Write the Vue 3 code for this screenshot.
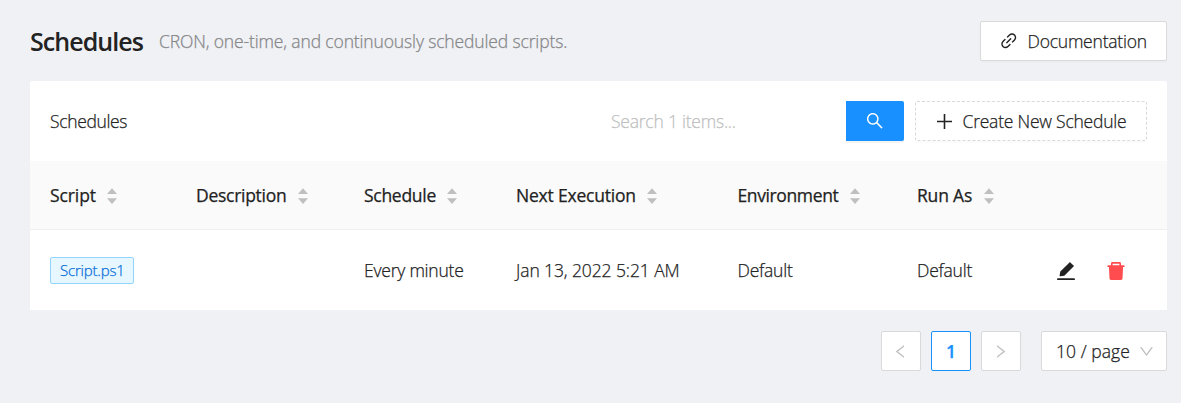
<script setup>
const columns = [
  { title: 'Script', fit: 'fit-a' },
  { title: 'Description', fit: 'fit-c' },
  { title: 'Schedule', fit: 'fit-c' },
  { title: 'Next Execution', fit: 'fit-b' },
  { title: 'Environment', fit: 'fit-d' },
  { title: 'Run As', fit: 'fit-b' },
]
</script>

<template>
  <main class="page">
    <header class="page-header">
      <h1>Schedules</h1>
      <p class="subtitle">CRON, one-time, and continuously scheduled scripts.</p>
      <button class="btn docs">
        <svg class="icon" viewBox="64 64 896 896"><path d="M574 665.4a8.03 8.03 0 00-11.3 0L446.5 781.6c-53.8 53.8-144.6 59.5-204 0-59.5-59.5-53.8-150.2 0-204l116.2-116.2c3.1-3.1 3.1-8.2 0-11.3l-39.8-39.8a8.03 8.03 0 00-11.3 0L191.4 526.5c-84.6 84.6-84.6 221.5 0 306s221.5 84.6 306 0l116.2-116.2c3.1-3.1 3.1-8.2 0-11.3L574 665.4zm258.6-474c-84.6-84.6-221.5-84.6-306 0L410.3 307.6a8.03 8.03 0 000 11.3l39.7 39.7c3.1 3.1 8.2 3.1 11.3 0l116.2-116.2c53.8-53.8 144.6-59.5 204 0 59.5 59.5 53.8 150.2 0 204L665.3 562.6a8.03 8.03 0 000 11.3l39.8 39.8c3.1 3.1 8.2 3.1 11.3 0l116.2-116.2c84.5-84.6 84.5-221.5 0-306.1zM610.1 372.3a8.03 8.03 0 00-11.3 0L372.3 598.7a8.03 8.03 0 000 11.3l39.6 39.6c3.1 3.1 8.2 3.1 11.3 0l226.4-226.4c3.1-3.1 3.1-8.2 0-11.3l-39.5-39.6z" /></svg>
        <span>Documentation</span>
      </button>
    </header>

    <section class="card">
      <div class="toolbar">
        <span class="card-title">Schedules</span>
        <div class="search">
          <input type="text" placeholder="Search 1 items..." />
          <button class="search-btn" aria-label="Search">
            <svg viewBox="64 64 896 896"><path d="M909.6 854.5L649.9 594.8C690.2 542.7 712 479 712 412c0-80.2-31.3-155.4-87.9-212.1-56.6-56.7-132-87.9-212.1-87.9s-155.5 31.3-212.1 87.9C143.2 256.5 112 331.8 112 412c0 80.1 31.3 155.5 87.9 212.1C256.5 680.8 331.8 712 412 712c67 0 130.6-21.8 182.7-62l259.7 259.6a8.2 8.2 0 0011.6 0l43.6-43.5a8.2 8.2 0 000-11.6zM570.4 570.4C528 612.7 471.8 636 412 636s-116-23.3-158.4-65.6C211.3 528 188 471.8 188 412s23.3-116.1 65.6-158.4C296 211.3 352.2 188 412 188s116.1 23.2 158.4 65.6S636 352.2 636 412s-23.3 116.1-65.6 158.4z" /></svg>
          </button>
        </div>
        <button class="btn create">
          <svg class="icon plus" viewBox="0 0 15 15"><path d="M6.7 0h1.6v6.7H15v1.6H8.3V15H6.7V8.3H0V6.7h6.7z" /></svg>
          <span>Create New Schedule</span>
        </button>
      </div>

      <div class="row head">
        <div v-for="c in columns" :key="c.title" class="cell">
          <span :class="c.fit">{{ c.title }}</span>
          <svg class="sorter" viewBox="0 0 10 16"><path d="M5 .2 10 6H0zM5 16 0 10.2h10z" /></svg>
        </div>
      </div>
      <div class="row body">
        <div class="cell"><span class="tag">Script.ps1</span></div>
        <div class="cell"></div>
        <div class="cell">Every minute</div>
        <div class="cell date">Jan 13, 2022 5:21 AM</div>
        <div class="cell">Default</div>
        <div class="cell">Default</div>
        <div class="cell actions">
          <svg class="edit" viewBox="64 64 896 896"><path d="M880 836H144c-17.7 0-32 14.3-32 32v36c0 4.4 3.6 8 8 8h784c4.4 0 8-3.6 8-8v-36c0-17.7-14.3-32-32-32zm-622.3-84c2 0 4-.2 6-.5L431.9 722c2-.4 3.9-1.3 5.3-2.8l423.9-423.9a9.96 9.96 0 000-14.1L694.9 114.9c-1.9-1.9-4.4-2.9-7.1-2.9s-5.2 1-7.1 2.9L256.8 538.8c-1.5 1.5-2.4 3.3-2.8 5.3l-29.5 168.2a33.5 33.5 0 009.4 29.8c6.6 6.4 14.9 9.9 23.8 9.9z" /></svg>
          <svg class="delete" viewBox="64 64 896 896"><path d="M864 256H736v-80c0-35.3-28.7-64-64-64H352c-35.3 0-64 28.7-64 64v80H160c-17.7 0-32 14.3-32 32v32c0 4.4 3.6 8 8 8h60.4l24.7 523c1.6 34.1 29.8 61 63.9 61h454c34.2 0 62.3-26.8 63.9-61l24.7-523H888c4.4 0 8-3.6 8-8v-32c0-17.7-14.3-32-32-32zm-200 0H360v-72h304v72z" /></svg>
        </div>
      </div>
    </section>

    <nav class="pagination">
      <button class="page-btn"><svg viewBox="64 64 896 896"><path d="M724 218.3V141c0-6.7-7.7-10.4-12.9-6.3L260.3 486.8a31.86 31.86 0 000 50.3l450.8 352.1c5.3 4.1 12.9.4 12.9-6.3v-77.3c0-4.9-2.3-9.6-6.1-12.6l-360-281 360-281.1c3.8-3 6.1-7.7 6.1-12.6z" /></svg></button>
      <button class="page-btn current"><span>1</span></button>
      <button class="page-btn"><svg viewBox="64 64 896 896"><path d="M765.7 486.8L314.9 134.7A7.97 7.97 0 00302 141v77.3c0 4.9 2.3 9.6 6.1 12.6l360 281.1-360 281.1c-3.9 3-6.1 7.7-6.1 12.6V883c0 6.7 7.7 10.4 12.9 6.3l450.8-352.1a31.96 31.96 0 000-50.4z" /></svg></button>
      <button class="page-size">
        <span>10 / page</span>
        <svg viewBox="64 64 896 896"><path d="M884 256h-75c-5.1 0-9.9 2.5-12.9 6.6L512 654.2 227.9 262.6c-3-4.1-7.8-6.6-12.9-6.6h-75c-6.5 0-10.3 7.4-6.5 12.7l352.6 486.1c12.8 17.6 39 17.6 51.7 0l352.6-486.1c3.9-5.3.1-12.7-6.4-12.7z" /></svg>
      </button>
    </nav>
  </main>
</template>

<style>
body {
  background: #f0f1f5;
}
</style>

<style scoped>
.page {
  box-sizing: border-box;
  height: 403px;
  padding: 21px 14px 0 30px;
  color: #222;
  background: #f0f1f5;
  font: 300 17.5px/28px "Open Sans", "Noto Sans", sans-serif;
  letter-spacing: -0.22px;
  -webkit-text-stroke: 0.25px currentColor;
}
button,
input {
  box-sizing: border-box;
  margin: 0;
  padding: 0;
  font: inherit;
  color: inherit;
  letter-spacing: inherit;
}
svg {
  display: block;
  flex: none;
  fill: currentColor;
}
.page-header {
  display: flex;
  align-items: center;
  height: 40px;
  margin-bottom: 20px;
}
h1 {
  margin: 0 15px 0 0;
  width: 114px;
  font-size: 25px;
  font-weight: 540;
  line-height: 40px;
  letter-spacing: -0.94px;
  white-space: nowrap;
  -webkit-text-stroke: 0;
}
.subtitle {
  margin: 0;
  color: #858687;
  letter-spacing: -0.14px;
}
.btn {
  display: flex;
  align-items: center;
  height: 40px;
  padding: 0 18.5px;
  border: 1px solid #d9d9d9;
  border-radius: 2px;
  background: #fff;
  box-shadow: 0 2px 0 rgba(0, 0, 0, 0.016);
  white-space: nowrap;
}
.docs {
  width: 187px;
  margin-left: auto;
  padding-left: 19px;
}
.icon {
  width: 17.5px;
  height: 17.5px;
  margin-right: 10px;
}
.card {
  border-radius: 2px 2px 0 0;
  background: #fff;
}
.toolbar {
  display: flex;
  align-items: center;
  height: 80px;
  padding: 0 20px;
}
.card-title {
  letter-spacing: -0.35px;
}
.search {
  display: flex;
  height: 40px;
  margin-left: auto;
  margin-right: 11px;
}
.search input {
  width: 250px;
  padding: 0 15px;
  border: 0;
  outline: 0;
  background: #fff;
}
.search input::placeholder {
  color: #bfbfbf;
  opacity: 1;
}
.search-btn {
  display: grid;
  place-items: center;
  width: 58px;
  border: 0;
  border-radius: 0 2px 2px 0;
  color: #fff;
  background: #1890ff;
  box-shadow: 0 2px 0 rgba(0, 0, 0, 0.045);
}
.search-btn svg {
  width: 17.5px;
  height: 17.5px;
}
.create {
  width: 232px;
  padding-left: 20.5px;
  border-style: dashed;
}
.plus {
  width: 15px;
  height: 15px;
  margin-right: 11px;
}
.row {
  display: grid;
  grid-template-columns: 146px 168px 152px 221.5px 179.5px 139px 1fr;
  box-sizing: border-box;
  padding-left: 20px;
}
.head {
  height: 69px;
  border-bottom: 1px solid #f0f0f0;
  background: #fafafa;
  font-weight: 530;
}
.body {
  height: 80px;
}
.cell {
  display: flex;
  align-items: center;
  white-space: nowrap;
}
.fit-a {
  letter-spacing: -0.1px;
}
.fit-b {
  letter-spacing: -0.2px;
}
.fit-c {
  letter-spacing: -0.28px;
}
.fit-d {
  letter-spacing: -0.38px;
}
.sorter {
  width: 10px;
  height: 16px;
  margin: 1px 0 0 11.5px;
  color: #bfbfbf;
}
.date {
  letter-spacing: -0.1px;
}
.tag {
  box-sizing: border-box;
  width: 84px;
  height: 27px;
  padding-left: 9px;
  border: 1px solid #91d5ff;
  border-radius: 2px;
  color: #096dd9;
  background: #e6f7ff;
  font-size: 15px;
  line-height: 25px;
  letter-spacing: -0.2px;
}
.actions {
  gap: 30px;
}
.actions svg {
  width: 20px;
  height: 20px;
  margin-top: 2px;
}
.actions .delete {
  color: #ff4d4f;
}
.pagination {
  display: flex;
  justify-content: flex-end;
  gap: 10px;
  margin-top: 21px;
}
.page-btn {
  display: grid;
  place-items: center;
  width: 40px;
  height: 40px;
  border: 1px solid #d9d9d9;
  border-radius: 2px;
  color: #bfbfbf;
  background: #fff;
}
.page-btn svg {
  width: 15px;
  height: 15px;
  margin-right: 1px;
}
.current {
  border-color: #1890ff;
  color: #1890ff;
  font-weight: 550;
}
.page-size {
  display: flex;
  align-items: center;
  justify-content: space-between;
  width: 126px;
  height: 40px;
  margin-left: 10px;
  padding: 0 12px 0 14px;
  border: 1px solid #d9d9d9;
  border-radius: 2px;
  background: #fff;
  letter-spacing: 0.05px;
  white-space: nowrap;
}
.page-size svg {
  width: 15px;
  height: 15px;
  color: #bfbfbf;
}
</style>
